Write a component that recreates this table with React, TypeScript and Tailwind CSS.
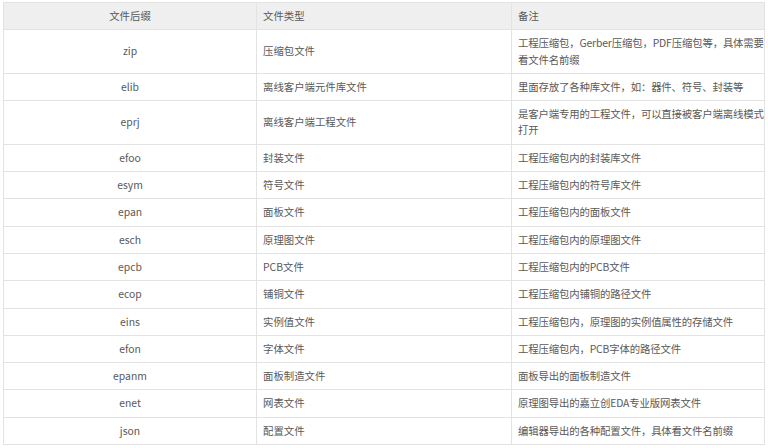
type Row = { ext: string; type: string; note: string[] };

const rows: Row[] = [
  {
    ext: "zip",
    type: "压缩包文件",
    note: ["工程压缩包，Gerber压缩包，PDF压缩包等，具体需要", "看文件名前缀"],
  },
  { ext: "elib", type: "离线客户端元件库文件", note: ["里面存放了各种库文件，如：器件、符号、封装等"] },
  {
    ext: "eprj",
    type: "离线客户端工程文件",
    note: ["是客户端专用的工程文件，可以直接被客户端离线模式", "打开"],
  },
  { ext: "efoo", type: "封装文件", note: ["工程压缩包内的封装库文件"] },
  { ext: "esym", type: "符号文件", note: ["工程压缩包内的符号库文件"] },
  { ext: "epan", type: "面板文件", note: ["工程压缩包内的面板文件"] },
  { ext: "esch", type: "原理图文件", note: ["工程压缩包内的原理图文件"] },
  { ext: "epcb", type: "PCB文件", note: ["工程压缩包内的PCB文件"] },
  { ext: "ecop", type: "铺铜文件", note: ["工程压缩包内铺铜的路径文件"] },
  { ext: "eins", type: "实例值文件", note: ["工程压缩包内，原理图的实例值属性的存储文件"] },
  { ext: "efon", type: "字体文件", note: ["工程压缩包内，PCB字体的路径文件"] },
  { ext: "epanm", type: "面板制造文件", note: ["面板导出的面板制造文件"] },
  { ext: "enet", type: "网表文件", note: ["原理图导出的嘉立创EDA专业版网表文件"] },
  { ext: "json", type: "配置文件", note: ["编辑器导出的各种配置文件，具体看文件名前缀"] },
];

// each cell draws its own right/bottom line; the grid draws left/top
const cell =
  "border-r border-b border-[#e3e3e3] py-[5px] px-[6px] leading-[16.3px] whitespace-nowrap overflow-hidden flex flex-col justify-center";

export default function App() {
  return (
    <div
      className="w-[768px] h-[448px] bg-white pt-[2px] pl-[3px] overflow-hidden text-[10.4px] text-[#595959]"
      style={{ fontFamily: '"Noto Sans CJK SC", "Noto Sans", sans-serif' }}
    >
      <div className="grid grid-cols-[253px_255px_253px] w-[762px] border-l border-t border-[#e3e3e3]">
        <div className={`${cell} bg-[#efefef] items-center`}>文件后缀</div>
        <div className={`${cell} bg-[#efefef]`}>文件类型</div>
        <div className={`${cell} bg-[#efefef]`}>备注</div>
        {rows.map((r) => (
          <Line key={r.ext} row={r} />
        ))}
      </div>
    </div>
  );
}

function Line({ row }: { row: Row }) {
  return (
    <>
      <div className={`${cell} items-center`}>{row.ext}</div>
      <div className={cell}>{row.type}</div>
      <div className={`${cell} tracking-[-0.15px]`}>
        {row.note.map((line, i) => (
          <span key={i}>{line}</span>
        ))}
      </div>
    </>
  );
}
